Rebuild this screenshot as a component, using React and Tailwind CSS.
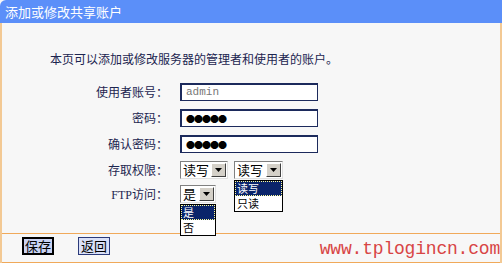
import React from 'react';

const font = { fontFamily: '"Noto Sans CJK SC", "Noto Sans", sans-serif' };

const Select = ({ value, width, open, options }) => (
  <div className="relative">
    <div className={`flex items-center h-[18px] ${width} bg-white border border-t-[#808080] border-l-[#808080] border-b-[#e0e0e0] border-r-[#e0e0e0]`}>
      <div className="flex-1 pl-[2px] text-[13px] leading-[16px] text-black">{value}</div>
      <div className="w-[15px] h-[14px] mr-[1px] bg-[#d4d0c8] border border-t-white border-l-white border-b-[#404040] border-r-[#404040] flex items-center justify-center">
        <svg width="7" height="4" viewBox="0 0 7 4">
          <path d="M0 0h7L3.5 4z" fill="#000" />
        </svg>
      </div>
    </div>
    {open && (
      <div className={`absolute left-0 top-[19px] ${width} bg-white border border-black z-10`}>
        {options.map((o, i) => (
          <div
            key={o}
            className={
              i === 0
                ? 'h-[15px] flex items-center text-[11px] leading-none pl-[1px] bg-[#0a246a] text-white border border-dotted border-[#ffff99]'
                : 'h-[15px] flex items-center text-[11px] leading-none pl-[2px] text-black'
            }
          >
            {o}
          </div>
        ))}
      </div>
    )}
  </div>
);

const Label = ({ children }) => (
  <div className="w-[168px] text-right pr-[2px] text-[12px] text-[#1c2550] leading-[18px]">{children}</div>
);

const TextBox = ({ children, mono }) => (
  <div className="ml-[10px] w-[138px] h-[18px] bg-white border border-[#1c2a5c] border-t-2 border-l-2 flex items-center pl-[4px]">
    {mono ? (
      <span className="text-[11px] text-[#777]" style={{ fontFamily: '"Liberation Mono", monospace' }}>{children}</span>
    ) : (
      <span className="text-[9px] tracking-[-1px] text-black leading-none">{children}</span>
    )}
  </div>
);

export default function App() {
  return (
    <div className="w-[502px] h-[263px] bg-[#f7f7f7] flex flex-col overflow-hidden" style={font}>
      <div className="h-[23px] bg-[#5b8ff9] rounded-tl-[6px] text-white text-[13px] leading-[23px] pl-[5px]">
        添加或修改共享账户
      </div>
      <div className="flex-1 flex flex-col border-l-2 border-r-2 border-[#f3c994]">
        <div className="h-[211px] flex flex-col border-b border-[#f0a95a]">
          <div className="mt-[29px] pl-[48px] text-[12px] leading-[14px] text-[#1c2550]">
            本页可以添加或修改服务器的管理者和使用者的账户。
          </div>
          <div className="mt-[17px] flex flex-col gap-[8px]">
            <div className="flex">
              <Label>使用者账号：</Label>
              <TextBox mono>admin</TextBox>
            </div>
            <div className="flex">
              <Label>密码：</Label>
              <TextBox>●●●●●</TextBox>
            </div>
            <div className="flex">
              <Label>确认密码：</Label>
              <TextBox>●●●●●</TextBox>
            </div>
          </div>
          <div className="mt-[8px] flex flex-col gap-[6px]">
            <div className="flex">
              <Label>存取权限：</Label>
              <div className="ml-[10px] flex gap-[6px]">
                <Select value="读写" width="w-[48px]" />
                <Select value="读写" width="w-[49px]" open options={['读写', '只读']} />
              </div>
            </div>
            <div className="flex">
              <Label>
                <span style={{ fontFamily: '"Liberation Serif", serif' }}>FTP</span>访问：
              </Label>
              <div className="ml-[10px]">
                <Select value="是" width="w-[36px]" open options={['是', '否']} />
              </div>
            </div>
          </div>
        </div>
        <div className="flex-1 flex items-start border-b border-[#f0a95a]">
          <div className="flex gap-[24px] pl-[20px] pt-[3px]">
            <div className="w-[32px] h-[18px] bg-[#c9d2f2] border-2 border-black text-[13px] leading-[14px] text-center text-black">保存</div>
            <div className="w-[32px] h-[18px] bg-[#d9e0f8] border border-[#2b3a7a] text-[13px] leading-[16px] text-center text-black">返回</div>
          </div>
          <div
            className="ml-auto pt-[6px] text-[18px] leading-[18px] text-[#d84545] tracking-[-0.2px]"
            style={{ fontFamily: '"Liberation Mono", monospace' }}
          >
            www.tplogincn.com
          </div>
        </div>
      </div>
    </div>
  );
}
